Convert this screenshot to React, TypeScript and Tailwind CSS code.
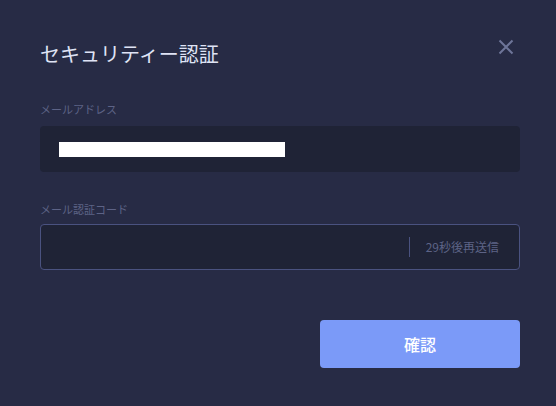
export default function App() {
  return (
    <div
      className="w-[556px] h-[406px] bg-[#272b45] pl-10 pr-[36px] pt-[36px] relative"
      style={{ fontFamily: '"Noto Sans CJK JP", "Noto Sans", sans-serif' }}
    >
      <div className="flex items-center justify-between h-[36px]">
        <h1 className="text-[20px] text-[#dfe3f5] leading-none">セキュリティー認証</h1>
        <button className="text-[#6e7599] self-start mt-[3px] mr-[6px]">
          <svg width="16" height="16" viewBox="0 0 16 16" fill="none" stroke="currentColor" strokeWidth="2">
            <path d="M1.5 1.5L14.5 14.5M14.5 1.5L1.5 14.5" />
          </svg>
        </button>
      </div>

      <div className="mt-[27px] text-[11px] leading-[20px] text-[#5d6386]">メールアドレス</div>
      <div className="mt-[7px] h-[46px] rounded bg-[#1f2336] flex items-center pl-[19px]">
        <div className="w-[226px] h-[15px] bg-white" />
      </div>

      <div className="mt-[27px] text-[11px] leading-[20px] text-[#5d6386]">メール認証コード</div>
      <div className="mt-[5px] h-[46px] rounded border border-[#4a5280] bg-[#1f2336] flex items-center justify-end pr-[20px]">
        <div className="w-px h-[20px] bg-[#4a5280] mr-[16px]" />
        <span className="text-[12px] text-[#5d6386]">29秒後再送信</span>
      </div>

      <div className="flex justify-end mt-[50px]">
        <button className="w-[200px] h-[48px] rounded bg-[#7b9af8] text-white text-[16px] font-medium">
          確認
        </button>
      </div>
    </div>
  );
}
